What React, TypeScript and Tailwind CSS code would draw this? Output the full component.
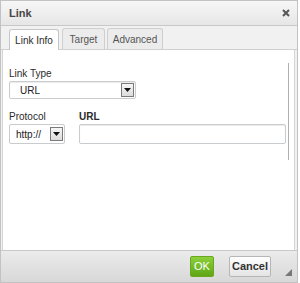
import React from "react";

function Arrow() {
  return (
    <div className="w-[13px] h-[14px] border border-[#7a7a7a] bg-gradient-to-b from-[#f6f6f6] to-[#dcdcdc] flex items-center justify-center">
      <svg width="7" height="4" viewBox="0 0 7 4"><path d="M0 0h7L3.5 4z" fill="#111" /></svg>
    </div>
  );
}

export default function App() {
  return (
    <div className="w-[300px] h-[283px] bg-white relative overflow-hidden" style={{ fontFamily: "Arial, 'Liberation Sans', sans-serif" }}>
      <div className="w-[298px] h-[283px] border border-[#c2c2c2] flex flex-col bg-[#f1f1f1]">
        {/* title bar */}
        <div className="h-[25px] shrink-0 bg-gradient-to-b from-[#f7f7f7] to-[#e6e6e6] border-b border-[#c8c8c8] flex items-center justify-between pl-[8px] pr-[7px]">
          <span className="text-[11px] font-bold text-[#474747]">Link</span>
          <svg width="8" height="8" viewBox="0 0 8 8"><path d="M1 1l6 6M7 1L1 7" stroke="#555" strokeWidth="2" /></svg>
        </div>
        {/* tabs */}
        <div className="h-[24px] shrink-0 flex items-end pl-[8px] border-b border-[#d0d0d0] bg-[#f1f1f1]">
          <div className="w-[50px] h-[21px] bg-white border border-b-0 border-[#c6c6c6] rounded-t-[3px] text-[10px] text-[#2b2b2b] flex items-center justify-center -mb-px relative">Link Info</div>
          <div className="ml-[3px] w-[43px] h-[21px] bg-[#ececec] border border-b-0 border-[#cfcfcf] rounded-t-[3px] text-[10px] text-[#555] flex items-center justify-center">Target</div>
          <div className="ml-[2px] w-[56px] h-[21px] bg-[#ececec] border border-b-0 border-[#cfcfcf] rounded-t-[3px] text-[10px] text-[#555] flex items-center justify-center">Advanced</div>
        </div>
        {/* content */}
        <div className="flex-1 bg-white ml-[1px] mr-[2px] border-l border-r border-[#d6d6d6] relative pl-[6px] pt-[18px]">
          <div className="text-[10px] text-[#2b2b2b] leading-[12px]">Link Type</div>
          <div className="mt-[1px] w-[127px] h-[18px] border border-[#c9cccf] rounded-[2px] flex items-center justify-between pl-[10px] pr-[1px] shadow-[inset_0_1px_1px_rgba(0,0,0,0.08)]">
            <span className="text-[10px] text-[#222]">URL</span>
            <Arrow />
          </div>
          <div className="flex mt-[12px] gap-[14px]">
            <div>
              <div className="text-[10px] text-[#2b2b2b] leading-[12px]">Protocol</div>
              <div className="mt-[1px] w-[56px] h-[20px] border border-[#c9cccf] rounded-[2px] flex items-center justify-between pl-[6px] pr-[1px]">
                <span className="text-[10px] text-[#222]">http://</span>
                <Arrow />
              </div>
            </div>
            <div>
              <div className="text-[10px] font-bold text-[#2b2b2b] leading-[12px]">URL</div>
              <div className="mt-[1px] w-[207px] h-[20px] border border-[#c9cccf] rounded-[2px] shadow-[inset_0_1px_1px_rgba(0,0,0,0.08)]" />
            </div>
          </div>
          <div className="absolute right-[5px] top-[13px] w-px h-[97px] bg-[#b0b0b0]" />
        </div>
        {/* footer */}
        <div className="h-[32px] shrink-0 bg-gradient-to-b from-[#ebebeb] to-[#d8d8d8] border-t border-[#c8c8c8] flex items-center justify-end pr-[26px] gap-[15px] relative">
          <div className="w-[24px] h-[21px] rounded-[2px] border border-[#6ca61f] bg-gradient-to-b from-[#8cd03b] to-[#5fa714] text-white text-[11px] flex items-center justify-center">OK</div>
          <div className="w-[42px] h-[21px] rounded-[2px] border border-[#b6b6b6] bg-gradient-to-b from-[#ffffff] to-[#e4e4e4] text-[#333] text-[11px] font-bold flex items-center justify-center">Cancel</div>
          <svg className="absolute right-[5px] bottom-[6px]" width="7" height="7" viewBox="0 0 7 7"><path d="M7 0V7H0z" fill="#777" /></svg>
        </div>
      </div>
    </div>
  );
}
